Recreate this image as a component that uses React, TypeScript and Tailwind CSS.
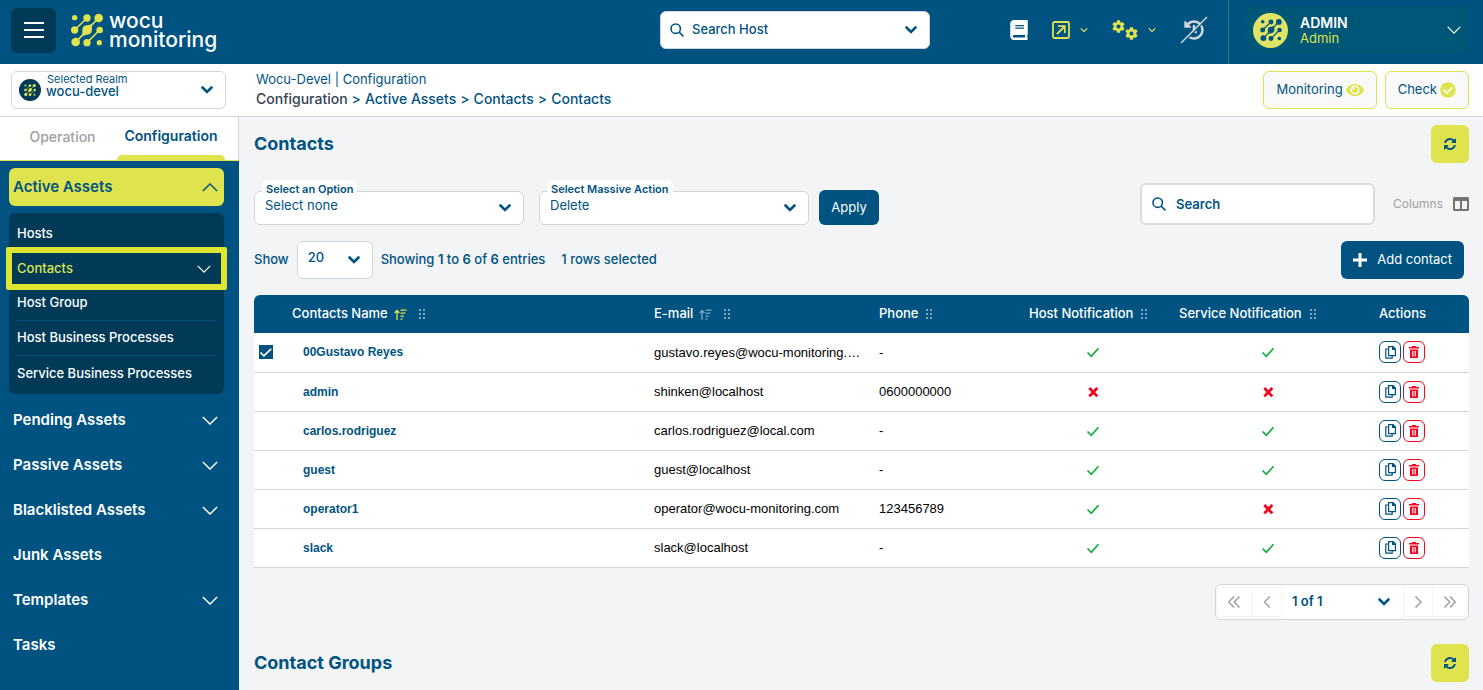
import { ReactNode, useState } from 'react';
import clsx from 'clsx';
import { FaBook, FaCheckCircle, FaCog, FaColumns, FaEye, FaHistory } from 'react-icons/fa';

interface Contact {
  name: string;
  email: string;
  phone: string;
  host: boolean;
  service: boolean;
}

const CONTACTS: Contact[] = [
  { name: '00Gustavo Reyes', email: 'gustavo.reyes@wocu-monitoring.com', phone: '-', host: true, service: true },
  { name: 'admin', email: 'shinken@localhost', phone: '0600000000', host: false, service: false },
  { name: 'carlos.rodriguez', email: 'carlos.rodriguez@local.com', phone: '-', host: true, service: true },
  { name: 'guest', email: 'guest@localhost', phone: '-', host: true, service: true },
  { name: 'operator1', email: 'operator@wocu-monitoring.com', phone: '123456789', host: true, service: false },
  { name: 'slack', email: 'slack@localhost', phone: '-', host: true, service: true },
];

const SUB_ITEMS = ['Hosts', 'Contacts', 'Host Group', 'Host Business Processes', 'Service Business Processes'];

const SECTIONS = [
  { label: 'Pending Assets', open: true },
  { label: 'Passive Assets', open: true },
  { label: 'Blacklisted Assets', open: true },
  { label: 'Junk Assets', open: false },
  { label: 'Templates', open: true },
  { label: 'Tasks', open: false },
];

function Nodes({ className }: { className?: string }) {
  return (
    <svg viewBox="211 41 96 98" className={className} fill="currentColor" stroke="currentColor" aria-hidden="true">
      <path d="M259 54 222 90M293 54 225 127M297 90 259 128" strokeWidth="5" fill="none" />
      <g stroke="none">
        <circle cx="222" cy="53" r="8" />
        <circle cx="259" cy="54" r="11" />
        <circle cx="294" cy="54" r="13" />
        <circle cx="222" cy="90" r="11" />
        <path d="M245 90Q245 76 259 76L273 73 274 88Q274 104 259 104L245 108Z" />
        <circle cx="297" cy="90" r="10" />
        <circle cx="225" cy="126" r="13" />
        <circle cx="259" cy="128" r="11" />
        <circle cx="296" cy="128" r="8" />
      </g>
    </svg>
  );
}

function Chevron({ className, up, width = 1.6 }: { className?: string; up?: boolean; width?: number }) {
  return (
    <svg viewBox="0 0 18 10" className={className} fill="none" stroke="currentColor" strokeWidth={width} aria-hidden="true">
      <path d={up ? 'M1 9 9 1 17 9' : 'M1 1 9 9 17 1'} />
    </svg>
  );
}

function SelectArrow() {
  return (
    <svg
      viewBox="0 0 12 8"
      className="pointer-events-none absolute inset-y-0 right-[13px] my-auto h-2 w-3"
      fill="none"
      stroke="currentColor"
      strokeWidth="2.6"
      strokeLinecap="round"
      aria-hidden="true"
    >
      <path d="M1.5 1.5 6 6 10.5 1.5" />
    </svg>
  );
}

function SearchIcon({ className }: { className?: string }) {
  return (
    <svg viewBox="0 0 14 14" className={clsx('h-3.5 w-3.5', className)} fill="none" stroke="currentColor" strokeWidth="1.6" aria-hidden="true">
      <circle cx="5.7" cy="5.7" r="4.7" />
      <path d="m9 9 4.4 4.4" />
    </svg>
  );
}

function RefreshIcon() {
  return (
    <svg viewBox="0 0 1536 1536" className="h-3 w-3" fill="currentColor" aria-hidden="true">
      <path d="M1511 928q0 5-1 7-64 268-268 434.5T764 1536q-146 0-282.5-55T238 1324l-129 129q-19 19-45 19t-45-19-19-45V960q0-26 19-45t45-19h448q26 0 45 19t19 45-19 45l-137 137q71 66 161 102t187 36q134 0 250-65t186-179q11-17 53-117 8-23 30-23h192q13 0 22.5 9.5t9.5 22.5zm25-800v448q0 26-19 45t-45 19h-448q-26 0-45-19t-19-45 19-45l138-138Q969 256 768 256q-134 0-250 65T332 500q-11 17-53 117-8 23-30 23H50q-13 0-22.5-9.5T18 608v-7q65-268 270-434.5T768 0q146 0 284 55.5T1297 212l130-129q19-19 45-19t45 19 19 45z" />
    </svg>
  );
}

function SortIcon({ className }: { className?: string }) {
  return (
    <svg viewBox="0 0 13 11" className={clsx('h-[11px] w-[13px]', className)} fill="none" stroke="currentColor" strokeWidth="1.3" aria-hidden="true">
      <path d="M3 11V1.5M.6 4 3 1.4 5.4 4M6.5 1.2h6M6.5 4.2h4.8M6.5 7.2h3.4M6.5 10.2h2" />
    </svg>
  );
}

function Grip() {
  return (
    <svg viewBox="0 0 6 10" className="h-2.5 w-1.5 text-[#7fa6c0]" fill="currentColor" aria-hidden="true">
      <path d="M0 0h2v2H0zM4 0h2v2H4zM0 4h2v2H0zM4 4h2v2H4zM0 8h2v2H0zM4 8h2v2H4z" />
    </svg>
  );
}

function CopyIcon() {
  return (
    <svg viewBox="0 0 11 13" className="h-[13px] w-[11px]" fill="none" stroke="currentColor" strokeWidth="1.2" aria-hidden="true">
      <path d="M3.6.6H8l2.4 2.4v6.6H3.6z" />
      <path d="M7.6.6v2.8h2.8z" fill="currentColor" />
      <path d="M3.6 3H.8v9.2h6.4V9.8" />
    </svg>
  );
}

function TrashIcon() {
  return (
    <svg viewBox="0 0 10 12" className="h-3 w-2.5" fill="currentColor" aria-hidden="true">
      <path d="M3.3 0h3.4l.5 1H10v1.5H0V1h2.8z" />
      <path fillRule="evenodd" d="M1 3.5h8V12H1zM3 5v5.5h.8V5zM4.6 5v5.5h.8V5zM6.2 5v5.5H7V5z" />
    </svg>
  );
}

function Status({ ok, label }: { ok: boolean; label: string }) {
  return ok ? (
    <svg viewBox="0 0 14 14" className="h-3.5 w-3.5 text-[#12ad3c]" fill="none" stroke="currentColor" strokeWidth="1.7" role="img" aria-label={label}>
      <path d="m1.5 7.5 3.8 3.8 7.2-8" />
    </svg>
  ) : (
    <svg viewBox="0 0 14 14" className="h-3.5 w-3.5 text-[#f5041d]" fill="none" stroke="currentColor" strokeWidth="2.8" role="img" aria-label={label}>
      <path d="m3.3 3 8 8.4M11.3 3l-8 8.4" />
    </svg>
  );
}

function TopBar() {
  return (
    <header className="flex h-16 items-center bg-[#005380] pb-1 text-white">
      <button aria-label="Menu" className="ml-[11px] flex h-[45px] w-[45px] items-center justify-center rounded-md bg-[#003a57]">
        <svg viewBox="0 0 20 18" className="h-[18px] w-5" stroke="currentColor" strokeWidth="1.8" aria-hidden="true">
          <path d="M0 2h20M0 9h20M0 16h20" />
        </svg>
      </button>
      <a href="#" className="ml-[15px] flex items-center gap-1.5">
        <Nodes className="h-[34px] w-8 text-[#dfe34e]" />
        <span className="text-[21px] leading-[19px] font-medium">
          <span className="block">wocu</span>
          <span className="block">monitoring</span>
        </span>
      </a>
      <div className="flex flex-1 justify-end pr-20">
        <div className="relative w-[270px] text-[#005380]">
          <SearchIcon className="pointer-events-none absolute inset-y-0 left-2.5 my-auto" />
          <select
            aria-label="Search Host"
            className="block h-[38px] w-full appearance-none rounded-md border border-gray-300 bg-white pl-[31px] text-[13px] font-medium"
          >
            <option>Search Host</option>
          </select>
          <SelectArrow />
        </div>
      </div>
      <div className="flex items-center text-[#dfe34e]">
        <button aria-label="Documentation" className="text-white">
          <FaBook className="h-5 w-[18px]" />
        </button>
        <button aria-label="Open" className="ml-6 flex items-center gap-2.5">
          <svg viewBox="0 0 18 18" className="h-[18px] w-[18px]" fill="none" stroke="currentColor" strokeWidth="1.8" aria-hidden="true">
            <rect x="1" y="1" width="16" height="16" rx="1.5" />
            <path d="m5 13 7.5-7.5M6 5.2h6.8V12" />
          </svg>
          <Chevron className="h-1 w-2" width={3} />
        </button>
        <button aria-label="Settings" className="ml-6 flex items-center gap-2.5">
          <span className="flex h-5">
            <FaCog className="h-[13px] w-[13px]" />
            <FaCog className="h-[13px] w-[13px] self-end" />
          </span>
          <Chevron className="h-1 w-2" width={3} />
        </button>
        <button aria-label="History off" className="relative ml-6 flex h-7 w-7 items-center justify-center text-gray-300">
          <FaHistory className="h-5 w-5" />
          <svg viewBox="0 0 28 28" className="absolute inset-0 h-7 w-7" fill="none" aria-hidden="true">
            <path d="M2 28 28 2" stroke="#005380" strokeWidth="1.2" />
            <path d="M1 27 27 1" stroke="currentColor" strokeWidth="1.5" />
          </svg>
        </button>
      </div>
      <div className="-mb-1 ml-5 flex h-16 items-center border-l border-[#337599] pr-3.5 pb-1 pl-4">
        <button className="flex h-[46px] w-56 items-center rounded-md bg-[#005676] px-2 text-left">
          <span className="flex h-[35px] w-[35px] items-center justify-center rounded-full bg-[#e0e464] text-[#005380]">
            <Nodes className="h-[22px] w-[22px]" />
          </span>
          <span className="ml-3 flex-1">
            <span className="block text-sm leading-4 font-semibold">ADMIN</span>
            <span className="block text-[13px] leading-[14px] text-[#dfe34e]">Admin</span>
          </span>
          <Chevron className="h-2 w-3.5" />
        </button>
      </div>
    </header>
  );
}

function RealmBar() {
  return (
    <div className="flex h-[53px] items-center border-b border-gray-300 bg-white pr-3.5 pl-[11px]">
      <div className="relative w-[215px]">
        <span className="pointer-events-none absolute top-2 left-2 flex h-[22px] w-[22px] items-center justify-center rounded-full bg-[#003a57] text-[#dfe34e]">
          <Nodes className="h-3 w-3" />
        </span>
        <label htmlFor="realm" className="pointer-events-none absolute top-0.5 left-9 text-[11px] leading-3">
          Selected Realm
        </label>
        <select
          id="realm"
          className="block h-[38px] w-full appearance-none rounded-md border border-gray-300 bg-white pt-1 pl-[34px] text-[13px] font-medium"
        >
          <option>wocu-devel</option>
        </select>
        <SelectArrow />
      </div>
      <div className="ml-[30px] flex-1 pb-0.5 text-[13px] leading-5">
        <p>Wocu-Devel | Configuration</p>
        <nav className="flex gap-1 text-sm leading-5 font-medium" aria-label="Breadcrumb">
          <span className="text-gray-700">Configuration</span>
          <span>&gt;</span>
          <a href="#">Active Assets</a>
          <span>&gt;</span>
          <a href="#">Contacts</a>
          <span>&gt;</span>
          <a href="#">Contacts</a>
        </nav>
      </div>
      <div className="flex gap-2 text-[13px]">
        <button className="flex h-[38px] items-center gap-[3px] rounded-md border border-[#dfe34e] bg-[#f9f9f9] px-3">
          Monitoring
          <FaEye className="h-[18px] w-[18px] text-[#dfe34e]" />
        </button>
        <button className="flex h-[38px] items-center gap-[3px] rounded-md border border-[#dfe34e] bg-[#f9f9f9] px-3">
          Check
          <FaCheckCircle className="h-4 w-4 text-[#dfe34e]" />
        </button>
      </div>
    </div>
  );
}

function Sidebar() {
  return (
    <aside className="flex w-[239px] shrink-0 flex-col bg-[#005380] text-white">
      <div className="flex h-11 items-stretch border-r border-b border-r-gray-300 border-b-[#dfe34e] bg-white text-sm">
        <button className="flex-1 pb-1 pl-2 font-medium text-neutral-400">Operation</button>
        <button className="mr-[13px] flex w-[108px] flex-col items-center justify-between font-semibold text-[#005380]">
          <span className="pt-[9px]">Configuration</span>
          <span className="h-[5px] w-full rounded-t-md bg-[#dfe34e]" />
        </button>
      </div>
      <nav className="pt-[7px] pr-[15px] pl-[9px]">
        <button className="flex h-[38px] w-full items-center justify-between rounded-md bg-[#dfe34e] pr-1.5 pl-1 text-[15px] font-semibold text-[#005380]">
          Active Assets
          <Chevron up className="h-[9px] w-4" />
        </button>
        <ul className="mt-[7px] rounded-md bg-[#003a57] px-2 py-[3px] text-[13px] font-medium">
          {SUB_ITEMS.map((item, i) => (
            <li key={item} className={clsx('relative h-[35px]', (i === 2 || i === 3) && 'border-b border-[#005380]')}>
              <a
                href="#"
                className={clsx('flex h-full items-center justify-between pr-[5px]', item === 'Contacts' && 'text-[#dfe34e]')}
              >
                {item}
                {item === 'Contacts' && <Chevron className="h-2 w-3.5 text-white" />}
              </a>
              {item === 'Contacts' && (
                <span className="pointer-events-none absolute -inset-x-[11px] -inset-y-1 rounded-xs border-[6px] border-[#dee631]" />
              )}
            </li>
          ))}
        </ul>
        <ul className="mt-1 text-[15px] font-semibold">
          {SECTIONS.map((s) => (
            <li key={s.label}>
              <button className="flex h-[45px] w-full items-center justify-between pr-1.5 pl-1">
                {s.label}
                {s.open && <Chevron className="h-[9px] w-4" />}
              </button>
            </li>
          ))}
        </ul>
      </nav>
    </aside>
  );
}

function Heading({ children }: { children: ReactNode }) {
  return (
    <div className="flex items-center justify-between">
      <h2 className="text-lg font-bold">{children}</h2>
      <button aria-label="Refresh" className="flex h-[38px] w-[38px] items-center justify-center rounded-md bg-[#dfe34e]">
        <RefreshIcon />
      </button>
    </div>
  );
}

function LabelledSelect({ id, label, value }: { id: string; label: string; value: string }) {
  return (
    <div className="relative w-[270px]">
      <label htmlFor={id} className="absolute -top-[11px] left-2 z-10 rounded-t-md bg-white px-1 pt-0.5 text-[11px] leading-[14px] font-semibold">
        {label}
      </label>
      <select id={id} className="block h-[34px] w-full appearance-none rounded-md border border-gray-300 bg-white pb-1 pl-2.5 text-[13px]">
        <option>{value}</option>
      </select>
      <SelectArrow />
    </div>
  );
}

function HeadCell({ children, width, sort, last }: { children?: ReactNode; width?: string; sort?: string; last?: boolean }) {
  return (
    <th scope="col" className={clsx('p-0 text-left font-medium', width)}>
      <div className="flex items-center">
        {children}
        {sort && <SortIcon className={clsx('ml-1.5', sort)} />}
        {!last && (
          <span className={sort ? 'ml-3' : 'ml-2'}>
            <Grip />
          </span>
        )}
      </div>
    </th>
  );
}

function ContactsTable() {
  const [selected, setSelected] = useState('00Gustavo Reyes');

  return (
    <table className="mt-4 w-full table-fixed overflow-hidden rounded-t-md bg-white">
      <thead className="bg-[#005380] text-[13px] text-white">
        <tr className="h-[38px]">
          <th className="w-[38px]" aria-label="Selected" />
          <HeadCell sort="text-[#dfe34e]">Contacts Name</HeadCell>
          <HeadCell width="w-[225px]" sort="text-[#7fa6c0]">E-mail</HeadCell>
          <HeadCell width="w-[150px]">Phone</HeadCell>
          <HeadCell width="w-[150px]">Host Notification</HeadCell>
          <HeadCell width="w-[200px]">Service Notification</HeadCell>
          <HeadCell width="w-[90px]" last>Actions</HeadCell>
        </tr>
      </thead>
      <tbody className="font-['Liberation_Sans',sans-serif] text-[13px] text-black">
        {CONTACTS.map((c) => (
          <tr
            key={c.name}
            className="h-[39px] border-b border-gray-300"
            onClick={() => setSelected(c.name)}
          >
            <td className="pl-[5px]">
              {selected === c.name && (
                <span className="relative block h-3.5 w-3.5">
                  <input
                    type="checkbox"
                    aria-label={`Select ${c.name}`}
                    defaultChecked
                    className="block h-3.5 w-3.5 appearance-none bg-[#005380]"
                  />
                  <svg viewBox="0 0 14 14" className="pointer-events-none absolute inset-0" fill="none" stroke="#fff" strokeWidth="1.7">
                    <path d="m1.5 7.5 3.4 3.3 7.3-7" />
                  </svg>
                </span>
              )}
            </td>
            <td className="pl-[11px] text-xs font-bold text-[#005380]">
              <a href="#">{c.name}</a>
            </td>
            <td>
              <div className="w-[209px] truncate">{c.email}</div>
            </td>
            <td>{c.phone}</td>
            <td className="pl-[57px]">
              <Status ok={c.host} label="Host notification" />
            </td>
            <td className="pl-[82px]">
              <Status ok={c.service} label="Service notification" />
            </td>
            <td>
              <div className="flex gap-0.5">
                <button aria-label="Copy" className="flex h-[22px] w-[22px] items-center justify-center rounded-md border border-[#005380] text-[#005380]">
                  <CopyIcon />
                </button>
                <button aria-label="Delete" className="flex h-[22px] w-[22px] items-center justify-center rounded-md border border-[#f5041d] text-[#f5041d]">
                  <TrashIcon />
                </button>
              </div>
            </td>
          </tr>
        ))}
      </tbody>
    </table>
  );
}

function PageButton({ label, d, className }: { label: string; d: string; className?: string }) {
  return (
    <button aria-label={label} className={clsx('flex h-[30px] items-center justify-center border border-gray-100 text-neutral-400', className)}>
      <svg viewBox="0 0 12 12" className="h-3 w-3" fill="none" stroke="currentColor" strokeWidth="1.5" aria-hidden="true">
        <path d={d} />
      </svg>
    </button>
  );
}

function Pagination() {
  return (
    <div className="mt-4 ml-auto flex h-9 w-[254px] items-center rounded-md border border-gray-300 bg-white text-[13px] font-semibold">
      <PageButton label="First page" d="M6 .5.8 6 6 11.5M11.5.5 6.3 6l5.2 5.5" className="w-9 rounded-l-md" />
      <PageButton label="Previous page" d="M9 .5 3.5 6 9 11.5" className="w-[30px] border-l-0" />
      <div className="relative flex-1">
        <select aria-label="Page" className="block w-full appearance-none pl-2.5">
          <option>1 of 1</option>
        </select>
        <SelectArrow />
      </div>
      <PageButton label="Next page" d="M3.5.5 9 6l-5.5 5.5" className="w-[30px]" />
      <PageButton label="Last page" d="M.5.5 5.7 6 .5 11.5M6 .5 11.2 6 6 11.5" className="w-[35px] rounded-r-md border-l-0" />
    </div>
  );
}

export default function App() {
  return (
    <div className="flex h-screen flex-col overflow-hidden bg-gray-100 font-['Inter','Liberation_Sans',sans-serif] text-[#005380]">
      <TopBar />
      <RealmBar />
      <div className="flex min-h-0 flex-1">
        <Sidebar />
        <main className="min-w-0 flex-1 pt-2 pr-3.5 pl-[15px]">
          <Heading>Contacts</Heading>
          <div className="mt-5 flex items-end">
            <LabelledSelect id="option" label="Select an Option" value="Select none" />
            <div className="ml-[15px]">
              <LabelledSelect id="massive" label="Select Massive Action" value="Delete" />
            </div>
            <button className="ml-2.5 h-[35px] w-[60px] rounded-md bg-[#005380] text-[13px] text-white">Apply</button>
            <div className="relative ml-auto w-[235px]">
              <SearchIcon className="absolute inset-y-0 left-3 my-auto" />
              <input
                type="text"
                aria-label="Search"
                placeholder="Search"
                className="block h-[42px] w-full rounded-md border-2 border-[#dbdcdd] bg-white pl-[34px] text-[13px] font-semibold placeholder:text-[#005380]"
              />
            </div>
            <button className="ml-[18px] flex h-[42px] items-center gap-2.5 text-xs text-neutral-400">
              Columns
              <FaColumns className="h-4 w-4 text-neutral-500" />
            </button>
          </div>
          <div className="mt-4 flex items-center text-[13px] font-medium">
            <label htmlFor="show">Show</label>
            <div className="relative ml-2 w-[76px]">
              <select id="show" className="block h-[38px] w-full appearance-none rounded-md border border-gray-300 bg-white pb-1 pl-2.5">
                <option>20</option>
              </select>
              <SelectArrow />
            </div>
            <p className="ml-2">
              Showing <b className="font-semibold">1</b> to <b className="font-semibold">6</b> of <b className="font-semibold">6</b> entries
            </p>
            <p className="ml-4">1 rows selected</p>
            <button className="mr-[5px] ml-auto flex h-[38px] items-center gap-2.5 rounded-md bg-[#005380] px-3 text-[13px] font-normal text-white">
              <svg viewBox="0 0 14 14" className="h-3.5 w-3.5" stroke="currentColor" strokeWidth="3" aria-hidden="true">
                <path d="M7 0v14M0 7h14" />
              </svg>
              Add contact
            </button>
          </div>
          <ContactsTable />
          <Pagination />
          <div className="mt-6">
            <Heading>Contact Groups</Heading>
          </div>
        </main>
      </div>
    </div>
  );
}
